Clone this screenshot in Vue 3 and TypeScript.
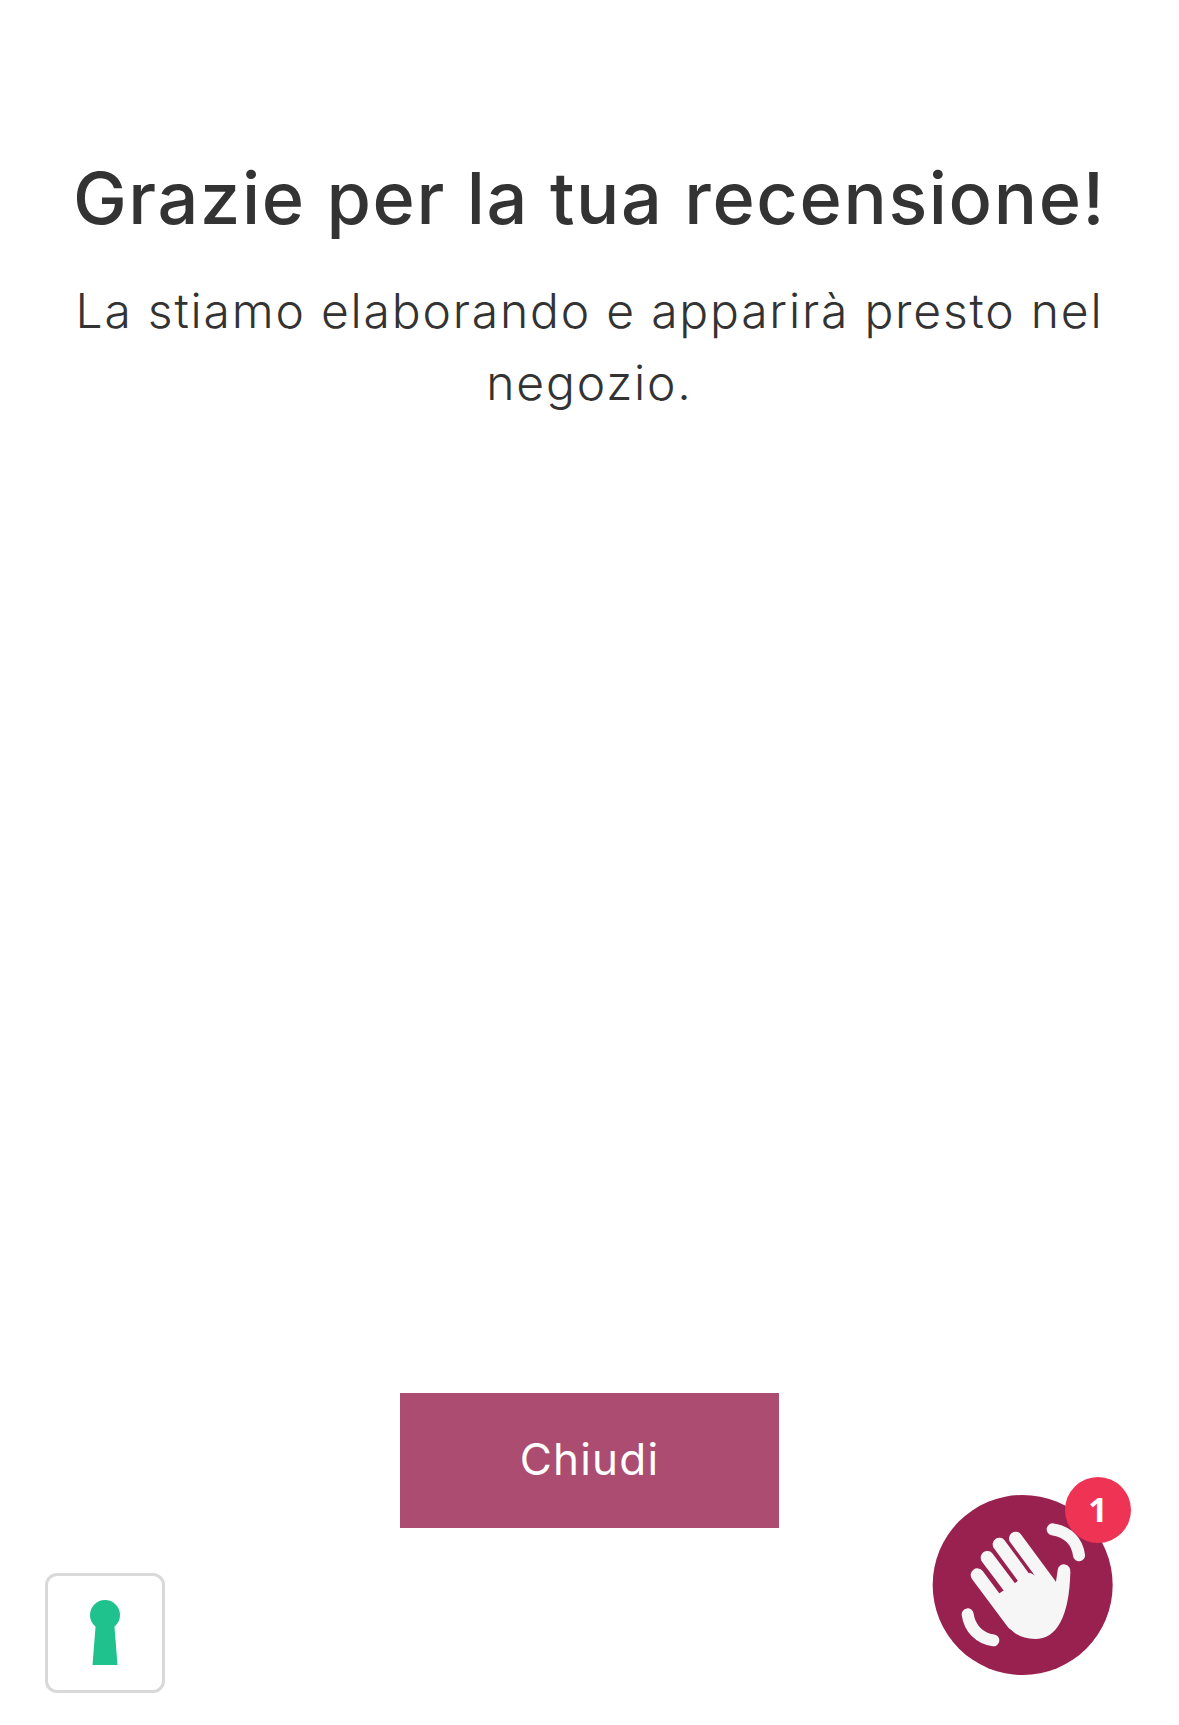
<script setup lang="ts">
const title = 'Grazie per la tua recensione!'
const message = 'La stiamo elaborando e apparirà presto nel negozio.'
</script>

<template>
  <main class="page">
    <section class="copy">
      <h1 class="title">{{ title }}</h1>
      <p class="message">{{ message }}</p>
    </section>
    <button class="close" type="button">Chiudi</button>

    <div class="lock">
      <svg width="120" height="120" viewBox="0 0 120 120" aria-hidden="true">
        <circle cx="60" cy="42" r="15" fill="#1fc18d" />
        <path d="M51 48H69L72.5 92H47.5Z" fill="#1fc18d" />
      </svg>
    </div>

    <div class="wave">
      <svg width="240" height="240" viewBox="0 0 720 720" aria-hidden="true">
        <circle cx="368" cy="405" r="270" fill="#99214f" />
        <g fill="none" stroke="#f6f6f7" stroke-linecap="round" stroke-linejoin="round">
          <path d="M458 238C505 246 532 275 537 316" stroke-width="36" />
          <path d="M203 493C209 535 238 565 280 571" stroke-width="36" />
          <path d="M232 375L340 520M262 323L335 420M298 283L380 395M347 265L450 405" stroke-width="40" />
          <path d="M492 362L482 430" stroke-width="38" />
        </g>
        <path
          d="M296 431L345 399L390 368L467 410L480 400L511 365C508 500 470 567 405 567C370 567 345 555 326 531L250 430Z"
          fill="#f6f6f7"
        />
      </svg>
      <span class="badge">1</span>
    </div>
  </main>
</template>

<style scoped>
.page {
  position: relative;
  box-sizing: border-box;
  height: 1725px;
  padding-top: 150px;
  display: flex;
  flex-direction: column;
  align-items: center;
  background: #fff;
  overflow: hidden;
  font-family: Inter, "Open Sans", sans-serif;
  color: #333;
}

.copy {
  width: 1060px;
  text-align: center;
}

.title {
  margin: 0;
  font-size: 72px;
  line-height: 96px;
  font-weight: 500;
  letter-spacing: 1.63px;
  white-space: nowrap;
}

.message {
  margin: 29px 0 0;
  font-size: 48px;
  line-height: 72px;
  font-weight: 300;
  letter-spacing: 1.8px;
}

.close {
  margin-top: 974px;
  width: 379px;
  height: 135px;
  border: 0;
  padding: 0 0 4px;
  background: #ab4c70;
  color: #fff;
  font: inherit;
  font-size: 44px;
  font-weight: 400;
  letter-spacing: 1.2px;
}

.lock {
  position: absolute;
  left: 45px;
  top: 1573px;
  width: 114px;
  height: 114px;
  border: 3px solid #d9d9d9;
  border-radius: 12px;
  background: #fff;
}

.lock svg {
  display: block;
  margin: -3px;
}

.wave {
  position: absolute;
  left: 900px;
  top: 1450px;
  width: 240px;
  height: 240px;
}

.wave svg {
  display: block;
}

.badge {
  position: absolute;
  left: 165px;
  top: 27px;
  width: 66px;
  height: 66px;
  border-radius: 50%;
  background: #ef3355;
  color: #fff;
  font-family: "Open Sans", sans-serif;
  font-size: 34px;
  font-weight: 700;
  line-height: 64px;
  text-align: center;
}
</style>
